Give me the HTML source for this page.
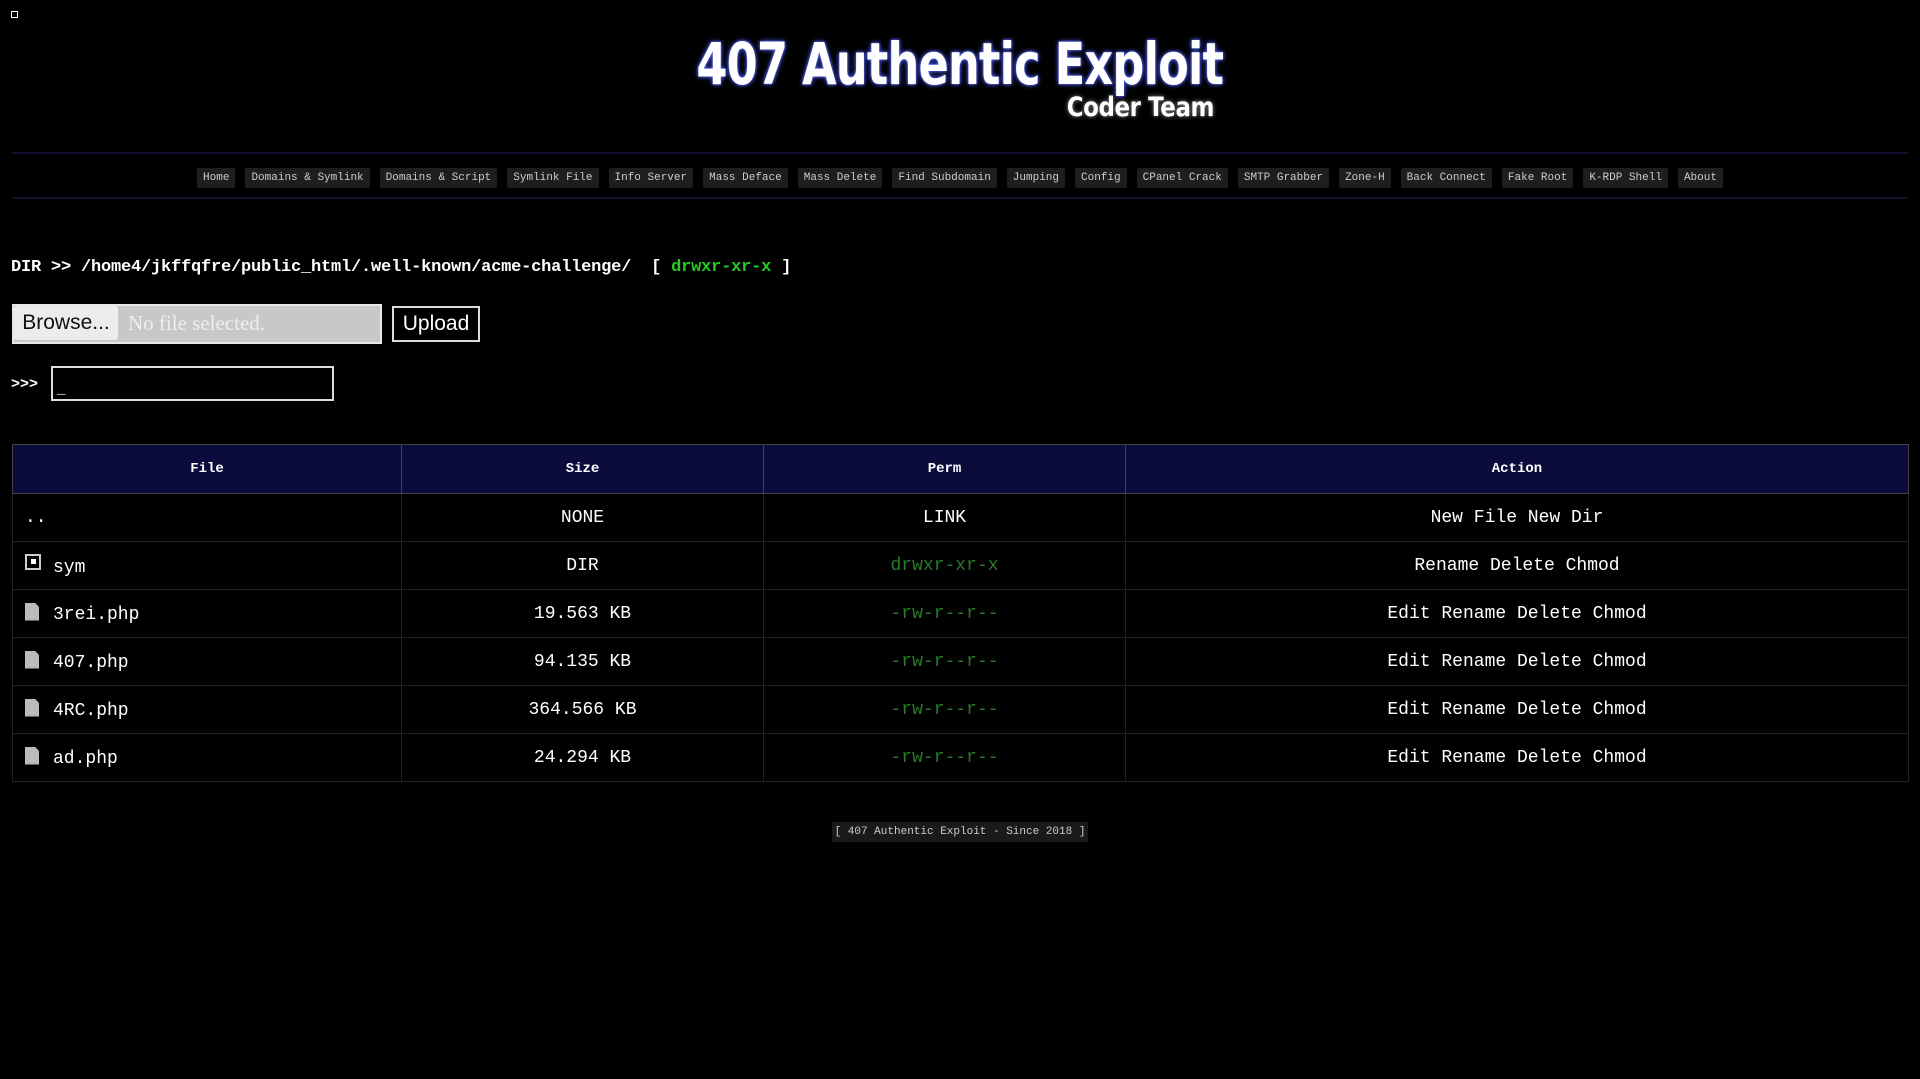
<!DOCTYPE html>
<html><head><meta charset="utf-8"><style>
body{margin:0;background:#000;width:1920px;height:1079px;position:relative;overflow:hidden;color:#fff;font-family:"Liberation Mono",monospace}
.a{position:absolute}
.t1{left:0;width:1920px;top:30px;text-align:center;font:bold 58px "DejaVu Sans","Liberation Sans",sans-serif;letter-spacing:-1px;text-shadow:0 0 6px #4a5cff,0 0 3px #6070ff;transform:scaleX(0.77);transform-origin:959px 0}
.t2{left:0;width:1214px;top:92px;text-align:right;font:bold 27px "DejaVu Sans","Liberation Sans",sans-serif;letter-spacing:-0.5px;text-shadow:0 0 5px #888;transform:scaleX(0.85);transform-origin:1214px 0}
.hr{left:12px;width:1896px;height:2px;background:#101030}
.nav{left:0;width:1920px;top:168px;display:flex;justify-content:center;gap:10px}
.nav span{background:#1e1e1e;color:#ccc;font-size:11px;height:20px;line-height:20px;padding:0 6px;border-radius:2px}
.dir{left:11px;top:258px;font-size:17px;font-weight:bold;white-space:pre;letter-spacing:-0.2px}
table{position:absolute;left:12px;top:444px;width:1897px;border-collapse:collapse;font-size:18px}
td,th{border:1px solid #222;height:47px;text-align:center;padding:0}
th{background:#0b0b3c;border-color:#444;font-size:14px;height:48px}
td.f{text-align:left;padding-left:12px}
.g{color:#2a7a2a}
.ic{display:inline-block;width:14px;height:18px;background:#bbb;vertical-align:-2px;margin-right:14px;clip-path:polygon(0 0,70% 0,100% 25%,100% 100%,0 100%)}
</style></head><body>
<div class="a" style="left:11px;top:11px;width:5px;height:5px;border:1px solid #fff"></div>
<div class="a t1">407 Authentic Exploit</div>
<div class="a t2">Coder Team</div>
<div class="a hr" style="top:152px"></div>
<div class="a nav"><span>Home</span><span>Domains &amp; Symlink</span><span>Domains &amp; Script</span><span>Symlink File</span><span>Info Server</span><span>Mass Deface</span><span>Mass Delete</span><span>Find Subdomain</span><span>Jumping</span><span>Config</span><span>CPanel Crack</span><span>SMTP Grabber</span><span>Zone-H</span><span>Back Connect</span><span>Fake Root</span><span>K-RDP Shell</span><span>About</span></div>
<div class="a hr" style="top:197px"></div>
<div class="a dir">DIR &gt;&gt; /home4/jkffqfre/public_html/.well-known/acme-challenge/  [ <span style="color:#22cc22">drwxr-xr-x</span> ]</div>
<div class="a" style="left:12px;top:304px;width:366px;height:36px;background:#c8c8c8;border:2px solid #e8e8e8"></div>
<div class="a" style="left:14px;top:306px;width:104px;height:34px;background:#ececec;border-radius:3px;color:#111;font:21px 'Liberation Sans',sans-serif;line-height:34px;text-align:center">Browse...</div>
<div class="a" style="left:128px;top:306px;color:#eee;font:21px 'Liberation Serif',serif;line-height:34px">No file selected.</div>
<div class="a" style="left:392px;top:306px;width:84px;height:32px;border:2px solid #ddd;font:21px 'Liberation Sans',sans-serif;line-height:32px;text-align:center">Upload</div>
<div class="a" style="left:11px;top:376px;font-size:15px;font-weight:bold">&gt;&gt;&gt;</div>
<div class="a" style="left:51px;top:366px;border:2px solid #ddd;font-size:14px;line-height:44px;padding-left:4px;box-sizing:border-box;width:283px;height:35px">_</div>
<table>
<tr><th style="width:388px">File</th><th style="width:361px">Size</th><th style="width:361px">Perm</th><th>Action</th></tr>
<tr><td class="f">..</td><td>NONE</td><td>LINK</td><td>New File New Dir</td></tr>
<tr><td class="f"><span style="display:inline-block;width:16px;height:16px;border:2px solid #ccc;box-sizing:border-box;margin-right:12px;vertical-align:2px;position:relative"><span style="position:absolute;left:4px;top:3px;width:5px;height:5px;background:#fff"></span></span>sym</td><td>DIR</td><td class="g">drwxr-xr-x</td><td>Rename Delete Chmod</td></tr>
<tr><td class="f"><span class="ic"></span>3rei.php</td><td>19.563 KB</td><td class="g">-rw-r--r--</td><td>Edit Rename Delete Chmod</td></tr>
<tr><td class="f"><span class="ic"></span>407.php</td><td>94.135 KB</td><td class="g">-rw-r--r--</td><td>Edit Rename Delete Chmod</td></tr>
<tr><td class="f"><span class="ic"></span>4RC.php</td><td>364.566 KB</td><td class="g">-rw-r--r--</td><td>Edit Rename Delete Chmod</td></tr>
<tr><td class="f"><span class="ic"></span>ad.php</td><td>24.294 KB</td><td class="g">-rw-r--r--</td><td>Edit Rename Delete Chmod</td></tr>
</table>
<div class="a" style="left:832px;top:822px;width:256px;height:20px;background:#1a1a1a;color:#ccc;font-size:11px;line-height:20px;text-align:center">[ 407 Authentic Exploit - Since 2018 ]</div>
</body></html>
